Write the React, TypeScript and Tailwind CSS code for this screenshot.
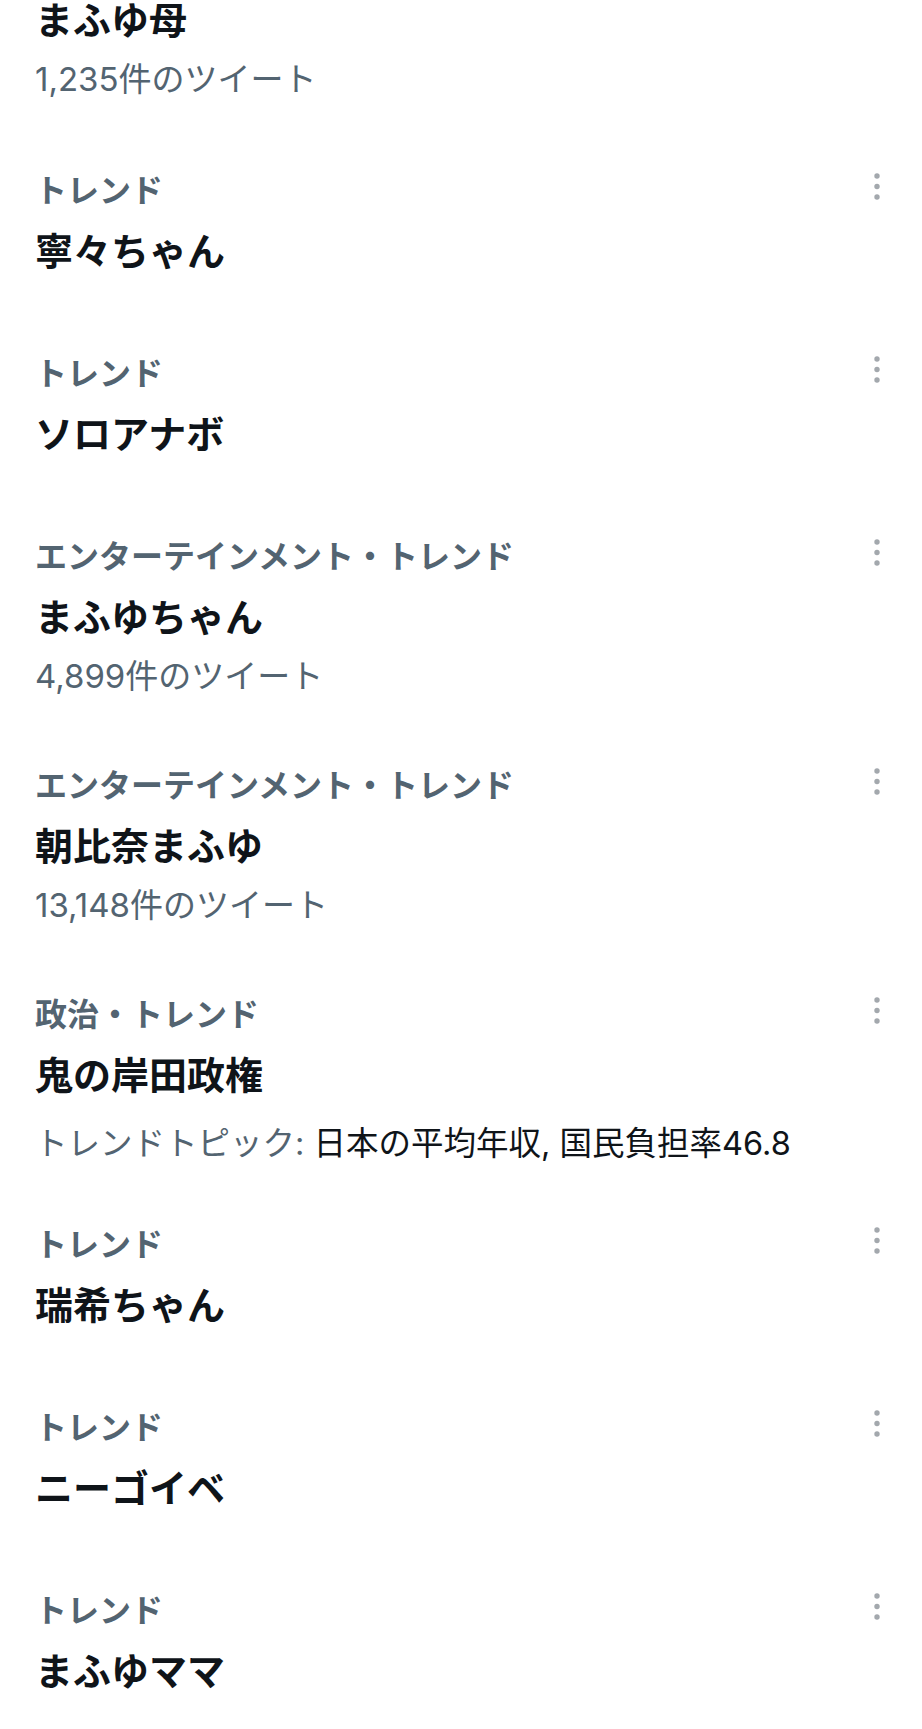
import React from "react";

type Row = {
  cat?: string;
  title: string;
  sub?: string;
  topic?: boolean;
};

const rows: Row[] = [
  { cat: "トレンド", title: "寧々ちゃん" },
  { cat: "トレンド", title: "ソロアナボ" },
  { cat: "エンターテインメント・トレンド", title: "まふゆちゃん", sub: "4,899件のツイート" },
  { cat: "エンターテインメント・トレンド", title: "朝比奈まふゆ", sub: "13,148件のツイート" },
  { cat: "政治・トレンド", title: "鬼の岸田政権", topic: true },
  { cat: "トレンド", title: "瑞希ちゃん" },
  { cat: "トレンド", title: "ニーゴイベ" },
  { cat: "トレンド", title: "まふゆママ" },
];

const font = { fontFamily: 'Inter, "Noto Sans CJK JP", sans-serif' };

function Dots() {
  return (
    <svg width="20" height="32" viewBox="0 0 20 32" className="shrink-0" aria-hidden>
      <circle cx="10" cy="5" r="2.7" fill="#a3a8ad" />
      <circle cx="10" cy="15.5" r="2.7" fill="#a3a8ad" />
      <circle cx="10" cy="26" r="2.7" fill="#a3a8ad" />
    </svg>
  );
}

function TrendRow({ r }: { r: Row }) {
  return (
    <div className={`flex pl-[35px] pr-[35px] pt-[40px] ${r.topic ? "pb-[21px]" : "pb-[39px]"}`}>
      <div className="flex-1 min-w-0">
        <div className="text-[32px] font-bold leading-[40px] text-[#536471] whitespace-nowrap">{r.cat}</div>
        <div className="mt-[16px] text-[38px] font-bold leading-[48px] text-[#0f1419] whitespace-nowrap">{r.title}</div>
        {r.sub && (
          <div className="mt-[24px] text-[33px] leading-[22px] text-[#536471] whitespace-nowrap">{r.sub}</div>
        )}
        {r.topic && (
          <div className="mt-[25px] text-[32.5px] leading-[40px] whitespace-nowrap">
            <span className="text-[#536471]">トレンドトピック: </span>
            <span className="text-[#0f1419]">日本の平均年収, 国民負担率46.8</span>
          </div>
        )}
      </div>
      <Dots />
    </div>
  );
}

export default function App() {
  return (
    <div className="w-[922px] h-[1729px] overflow-hidden bg-white" style={font}>
      <div className="pl-[35px] pr-[35px] pb-[41px]">
        <div className="-mt-[4px] text-[38px] font-bold leading-[48px] text-[#0f1419] whitespace-nowrap">まふゆ母</div>
        <div className="mt-[24px] text-[33px] leading-[22px] text-[#536471] whitespace-nowrap">1,235件のツイート</div>
      </div>
      {rows.map((r, i) => (
        <TrendRow key={i} r={r} />
      ))}
    </div>
  );
}
